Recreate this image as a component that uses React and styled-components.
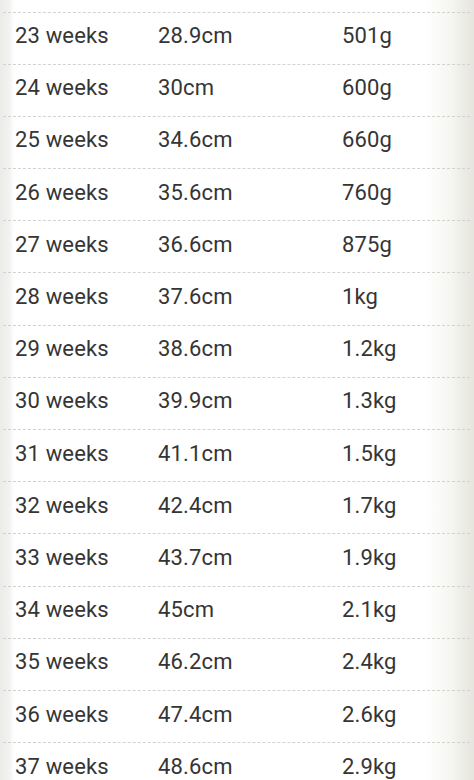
import * as React from 'react';
import styled, { createGlobalStyle } from 'styled-components';

const GlobalStyle = createGlobalStyle`
  html, body {
    margin: 0;
    padding: 0;
    background: #ffffff;
  }
`;

const Page = styled.div`
  position: relative;
  width: 474px;
  height: 780px;
  overflow: hidden;
  padding-top: 11.5px;
  box-sizing: border-box;
  font-family: Roboto, 'Liberation Sans', sans-serif;
  color: #353535;
  background: linear-gradient(
    to right,
    #ebebe8 0px,
    #f3f3f1 10px,
    #ffffff 14px,
    #ffffff 425px,
    #f5f5f1 452px,
    #e5e5dd 474px
  );
`;

const Row = styled.div`
  display: grid;
  grid-template-columns: 143px 184px 1fr;
  align-items: center;
  height: 52.2px;
  box-sizing: border-box;
  padding: 0 0 4px 12px;
  margin: 0 4px 0 3px;
  border-top: 1px dashed #d2d2cf;
  font-size: 22px;
  line-height: 1;
  letter-spacing: 0.15px;
`;

const Cell = styled.span`
  white-space: nowrap;
`;

const rows = [
  ['23 weeks', '28.9cm', '501g'],
  ['24 weeks', '30cm', '600g'],
  ['25 weeks', '34.6cm', '660g'],
  ['26 weeks', '35.6cm', '760g'],
  ['27 weeks', '36.6cm', '875g'],
  ['28 weeks', '37.6cm', '1kg'],
  ['29 weeks', '38.6cm', '1.2kg'],
  ['30 weeks', '39.9cm', '1.3kg'],
  ['31 weeks', '41.1cm', '1.5kg'],
  ['32 weeks', '42.4cm', '1.7kg'],
  ['33 weeks', '43.7cm', '1.9kg'],
  ['34 weeks', '45cm', '2.1kg'],
  ['35 weeks', '46.2cm', '2.4kg'],
  ['36 weeks', '47.4cm', '2.6kg'],
  ['37 weeks', '48.6cm', '2.9kg'],
];

const App = () => (
  <>
    <GlobalStyle />
    <Page>
      {rows.map(([week, length, weight]) => (
        <Row key={week}>
          <Cell>{week}</Cell>
          <Cell>{length}</Cell>
          <Cell>{weight}</Cell>
        </Row>
      ))}
    </Page>
  </>
);

export default App;
